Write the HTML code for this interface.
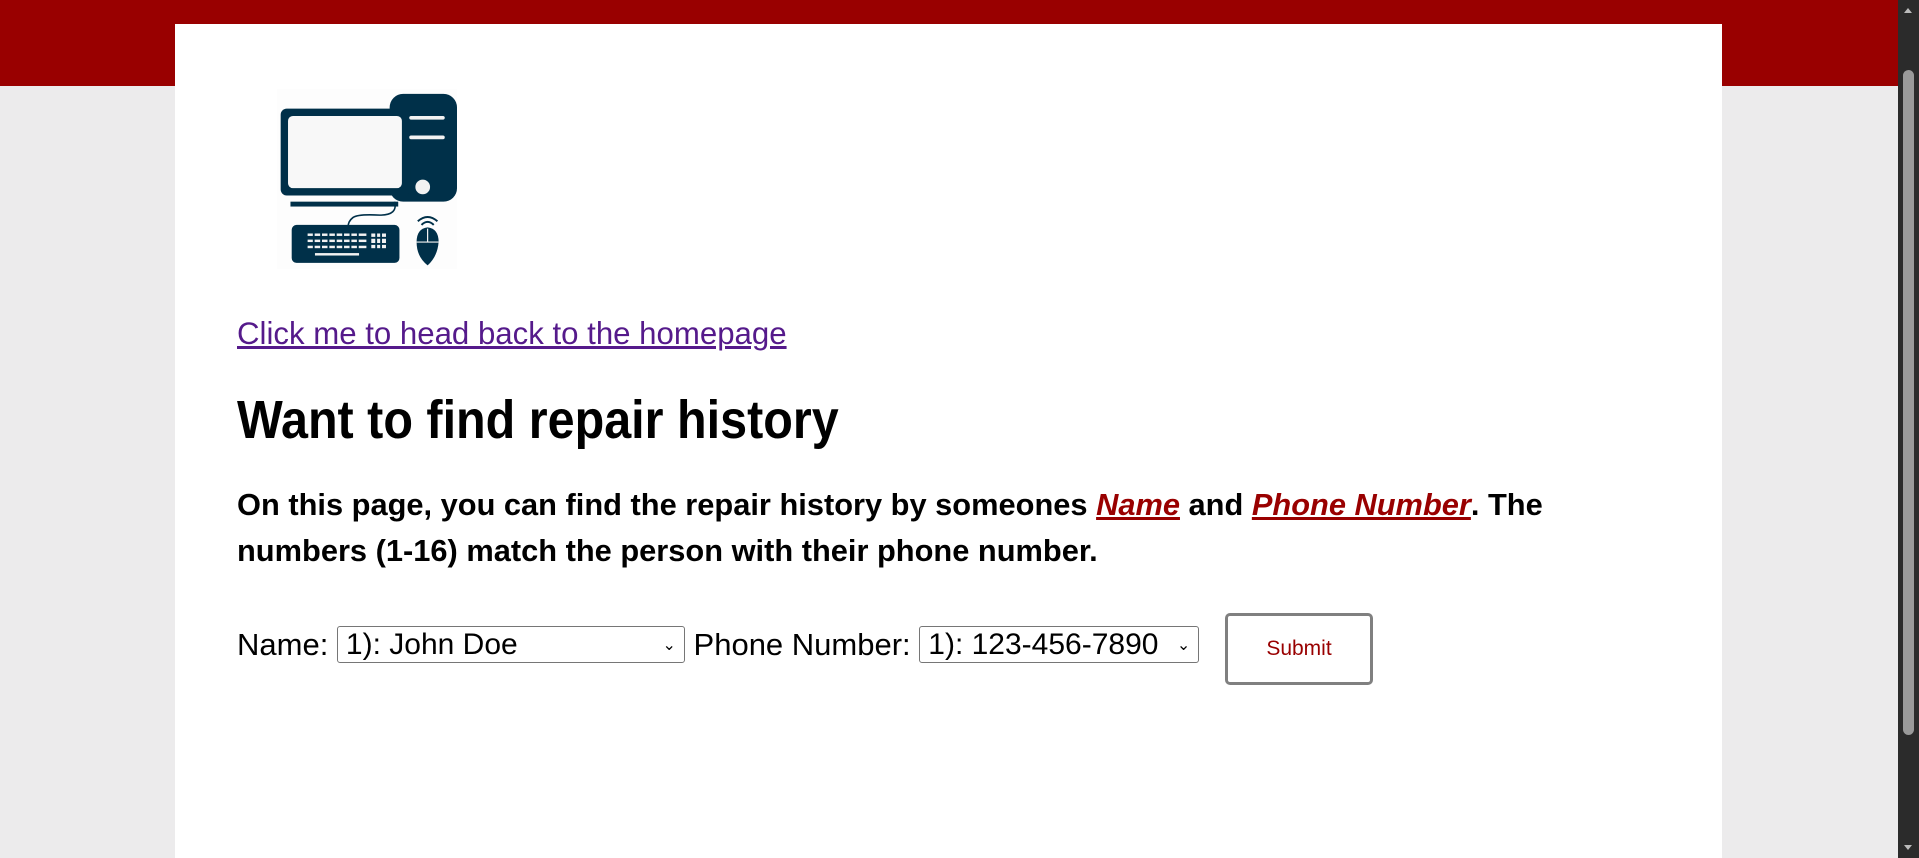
<!DOCTYPE html>
<html><head><style>
html,body{margin:0;padding:0;width:1919px;height:858px;overflow:hidden;background:#ecebec;font-family:"Liberation Sans",Arial,sans-serif}
.hdr{position:absolute;left:0;top:0;width:1898px;height:86px;background:#990000}
.panel{position:absolute;left:175px;top:24px;width:1547px;height:834px;background:#fff}
.sb{position:absolute;left:1898px;top:0;width:21px;height:858px;background:#2b2b2b}
.sb .th{position:absolute;left:5px;top:70px;width:11px;height:665px;background:#9a9a9a;border-radius:6px}
.sb .up{position:absolute;left:6px;top:8px;width:0;height:0;border-left:4px solid transparent;border-right:4px solid transparent;border-bottom:5px solid #bbb}
.sb .dn{position:absolute;left:6px;top:845px;width:0;height:0;border-left:4px solid transparent;border-right:4px solid transparent;border-top:5px solid #bbb}
.a{position:absolute;left:237px;white-space:nowrap}
.link{top:316px;font-size:31.2px;color:#551a8b;text-decoration:underline}
h1{position:absolute;left:237px;top:389px;margin:0;font-size:54px;font-weight:bold;white-space:nowrap;transform:scaleX(0.898);transform-origin:0 0;line-height:62px}
.p{top:482px;font-size:30.8px;font-weight:bold;line-height:46px}
.p i{color:#990000;text-decoration:underline}
.form{top:626px;font-size:31px;display:flex;align-items:center}
.sel{box-sizing:border-box;height:37px;border:1px solid #767676;border-radius:3px;padding:0 8px;display:flex;align-items:center;justify-content:space-between;font-size:30px;background:#fff}
.btn{position:absolute;left:1225px;top:613px;width:148px;height:72px;box-sizing:border-box;border:3px solid #808080;border-radius:5px;color:#990000;font-size:21px;display:flex;align-items:center;justify-content:center}
</style></head><body>
<div class="hdr"></div>
<div class="panel"></div>
<div class="sb"><div class="up"></div><div class="th"></div><div class="dn"></div></div>
<svg style="position:absolute;left:277px;top:89px" width="180" height="180" viewBox="226 73 147 147">
<rect x="226" y="73" width="147" height="147" fill="#fdfdfd"/>
<rect x="318" y="77" width="55" height="88" rx="11" fill="#003049"/>
<rect x="229" y="89" width="106" height="71" rx="5" fill="#003049"/>
<rect x="235" y="95" width="93" height="59" rx="4" fill="#f8f8f8"/>
<rect x="334" y="95" width="29" height="3" rx="1.5" fill="#f2f2f2"/>
<rect x="334" y="111" width="29" height="3" rx="1.5" fill="#f2f2f2"/>
<circle cx="345" cy="153" r="6" fill="#f2f2f2"/>
<rect x="237" y="165" width="88" height="4" fill="#003049"/>
<path d="M322 165 Q325 176 310 176 Q292 175 288 178 Q284 181 284 186" stroke="#003049" stroke-width="1.3" fill="none"/>
<rect x="238" y="184" width="88" height="31" rx="4" fill="#003049"/>
<g fill="#f2f2f2">
<rect x="251" y="191" width="48" height="2"/>
<rect x="251" y="196" width="48" height="2"/>
<rect x="251" y="201" width="48" height="2"/>
<rect x="303" y="191" width="12" height="12"/>
<rect x="257" y="207" width="36" height="2"/>
</g>
<g stroke="#003049" stroke-width="1.5">
<line x1="256" y1="190" x2="256" y2="204"/><line x1="262" y1="190" x2="262" y2="204"/><line x1="268" y1="190" x2="268" y2="204"/><line x1="274" y1="190" x2="274" y2="204"/><line x1="280" y1="190" x2="280" y2="204"/><line x1="286" y1="190" x2="286" y2="204"/><line x1="292" y1="190" x2="292" y2="204"/><line x1="307" y1="190" x2="307" y2="204"/><line x1="311" y1="190" x2="311" y2="204"/>
<line x1="300" y1="194.5" x2="316" y2="194.5"/><line x1="300" y1="199.5" x2="316" y2="199.5"/>
</g>
<path d="M349 186 Q358 187 358 198 Q357 210 349 217 Q340 210 340 198 Q340 187 349 186Z" fill="#003049"/>
<line x1="340" y1="198" x2="358" y2="198" stroke="#f2f2f2" stroke-width="1"/>
<line x1="349" y1="187" x2="349" y2="198" stroke="#f2f2f2" stroke-width="1"/>
<path d="M341 181 Q349 174 357 181 M344 184 Q349 179 354 184" stroke="#003049" stroke-width="1.6" fill="none"/>
</svg>
<div class="a link">Click me to head back to the homepage</div>
<h1>Want to find repair history</h1>
<div class="a p">On this page, you can find the repair history by someones <i>Name</i> and <i>Phone Number</i>. The<br>numbers (1-16) match the person with their phone number.</div>
<div class="a form">Name:&nbsp;<div class="sel" style="width:348px"><span>1): John Doe</span><span style="font-size:16px">&#8964;</span></div>&nbsp;Phone Number:&nbsp;<div class="sel" style="width:280px"><span>1): 123-456-7890</span><span style="font-size:16px">&#8964;</span></div></div>
<div class="btn">Submit</div>
</body></html>
